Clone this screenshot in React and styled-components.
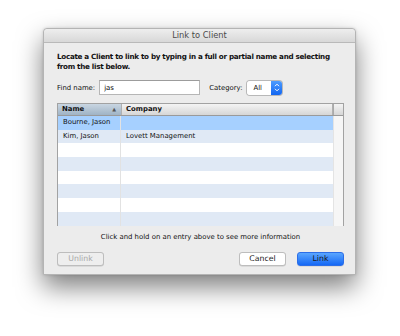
import React from "react";
import styled, { createGlobalStyle } from "styled-components";

const rows = [
  { name: "Bourne, Jason", company: "", selected: true },
  { name: "Kim, Jason", company: "Lovett Management" },
  {},
  {},
  {},
  {},
  {},
  {},
];

export default function App() {
  return (
    <>
      <GlobalStyle />
      <Page>
        <Window>
          <TitleBar>Link to Client</TitleBar>
          <Body>
            <Instructions>
              Locate a Client to link to by typing in a full or partial name and
              selecting from the list below.
            </Instructions>
            <SearchRow>
              <Label>Find name:</Label>
              <TextInput defaultValue="jas" />
              <Label>Category:</Label>
              <Select>
                <SelectValue>All</SelectValue>
                <SelectArrows>
                  <svg width="6" height="9" viewBox="0 0 6 9">
                    <path
                      d="M1 3.2 L3 1.2 L5 3.2 M1 5.8 L3 7.8 L5 5.8"
                      fill="none"
                      stroke="#fff"
                      strokeWidth="1"
                    />
                  </svg>
                </SelectArrows>
              </Select>
            </SearchRow>
            <Table>
              <HeaderRow>
                <HeadCell $sorted>
                  Name
                  <SortArrow>▲</SortArrow>
                </HeadCell>
                <HeadCell>Company</HeadCell>
                <HeadCorner />
              </HeaderRow>
              <Rows>
                {rows.map((row, i) => (
                  <Row key={i} $alt={i % 2 === 1} $selected={row.selected}>
                    <NameCell>{row.name}</NameCell>
                    <CompanyCell>{row.company}</CompanyCell>
                    <ScrollGutter />
                  </Row>
                ))}
              </Rows>
            </Table>
            <Hint>Click and hold on an entry above to see more information</Hint>
            <ButtonRow>
              <Button disabled>Unlink</Button>
              <Spacer />
              <Button>Cancel</Button>
              <Button $primary>Link</Button>
            </ButtonRow>
          </Body>
        </Window>
      </Page>
    </>
  );
}

const GlobalStyle = createGlobalStyle`
  body {
    margin: 0;
    background: #ffffff;
    font-family: "DejaVu Sans", "Noto Sans", sans-serif;
    color: #111;
  }
`;

const Page = styled.div`
  min-height: 336px;
  box-sizing: border-box;
  padding: 28px 0 0 43px;
`;

const Window = styled.div`
  width: 313px;
  height: 247px;
  box-sizing: border-box;
  background: #ececec;
  border: 1px solid #b4b4b4;
  border-radius: 4px 4px 0 0;
  box-shadow: 0 12px 26px rgba(0, 0, 0, 0.5), 0 0 3px rgba(0, 0, 0, 0.15);
  display: flex;
  flex-direction: column;
`;

const TitleBar = styled.div`
  height: 13px;
  border-bottom: 1px solid #b9b9b9;
  border-radius: 4px 4px 0 0;
  background: linear-gradient(#eeeeee, #d8d8d8);
  font-size: 8.3px;
  line-height: 13px;
  text-align: center;
  color: #4a4a4a;
`;

const Body = styled.div`
  padding: 9px 11px 0 13px;
  display: flex;
  flex-direction: column;
`;

const Instructions = styled.div`
  font-size: 7.2px;
  font-weight: bold;
  letter-spacing: -0.3px;
  line-height: 10px;
  width: 287px;
`;

const SearchRow = styled.div`
  margin-top: 8px;
  display: flex;
  align-items: center;
  height: 15px;
`;

const Label = styled.span`
  font-size: 6.9px;
  margin-right: 4px;
`;

const TextInput = styled.input`
  width: 101px;
  height: 15px;
  box-sizing: border-box;
  border: 1px solid #b6b6b6;
  border-top-color: #9c9c9c;
  background: #fff;
  font: 6.9px "DejaVu Sans", sans-serif;
  padding: 0 4px;
  margin: 0 9px 0 0;
  outline: none;
`;

const Select = styled.div`
  display: flex;
  height: 14px;
  width: 35px;
  border-radius: 3px;
  overflow: hidden;
  box-shadow: 0 0 0 1px #b8b8b8;
  margin-left: 1px;
`;

const SelectValue = styled.div`
  flex: 1;
  background: #fff;
  font-size: 6.9px;
  line-height: 14px;
  padding-left: 6px;
`;

const SelectArrows = styled.div`
  width: 11px;
  background: linear-gradient(#4d9cff, #1266f1);
  display: flex;
  align-items: center;
  justify-content: center;
`;

const Table = styled.div`
  margin-top: 8px;
  width: 287px;
  height: 123px;
  box-sizing: border-box;
  border: 1px solid #a2a2a2;
  background: #fff;
  display: flex;
  flex-direction: column;
`;

const HeaderRow = styled.div`
  display: flex;
  height: 11px;
  border-bottom: 1px solid #9a9a9a;
  background: linear-gradient(#f4f4f4, #d6d6d6);
`;

const HeadCell = styled.div`
  position: relative;
  box-sizing: border-box;
  font-size: 6.9px;
  font-weight: bold;
  line-height: 11px;
  padding-left: 4px;
  border-right: 1px solid #b0b0b0;
  ${(p) =>
    p.$sorted
      ? `width: 64px; background: linear-gradient(#c9d6e2, #9fb3c5);`
      : `flex: 1;`}
`;

const SortArrow = styled.span`
  position: absolute;
  right: 5px;
  top: 0;
  font-size: 5px;
  color: #555;
`;

const HeadCorner = styled.div`
  width: 9px;
  border-left: 1px solid #a9a9a9;
`;

const Rows = styled.div`
  flex: 1;
  display: flex;
  flex-direction: column;
`;

const Row = styled.div`
  display: flex;
  height: 13.7px;
  font-size: 6.9px;
  line-height: 13.7px;
  background: ${(p) => (p.$selected ? "#a6d0ff" : p.$alt ? "#e0e9f5" : "#ffffff")};
`;

const NameCell = styled.div`
  width: 63px;
  padding-left: 5px;
  box-sizing: border-box;
  border-right: 1px solid #e2e2e2;
`;

const CompanyCell = styled.div`
  flex: 1;
  padding-left: 5px;
`;

const ScrollGutter = styled.div`
  width: 9px;
  background: #f6f6f6;
  border-left: 1px solid #e4e4e4;
`;

const Hint = styled.div`
  margin-top: 6px;
  width: 287px;
  text-align: center;
  font-size: 6.9px;
  line-height: 10px;
`;

const ButtonRow = styled.div`
  margin-top: 10px;
  width: 287px;
  display: flex;
  gap: 11px;
`;

const Spacer = styled.div`
  flex: 1;
`;

const Button = styled.button`
  width: 47px;
  height: 14px;
  padding: 0;
  box-sizing: border-box;
  border-radius: 3px;
  font: 7.8px "DejaVu Sans", sans-serif;
  line-height: 12px;
  border: 1px solid ${(p) => (p.$primary ? "#2c6ee8" : "#bdbdbd")};
  color: ${(p) => (p.disabled ? "#a9a9a9" : "#1a1a1a")};
  background: ${(p) =>
    p.$primary
      ? "linear-gradient(#5aa6ff, #1568f5)"
      : p.disabled
      ? "#eeeeee"
      : "#ffffff"};
  box-shadow: 0 0.5px 0.5px rgba(0, 0, 0, 0.15);
`;
